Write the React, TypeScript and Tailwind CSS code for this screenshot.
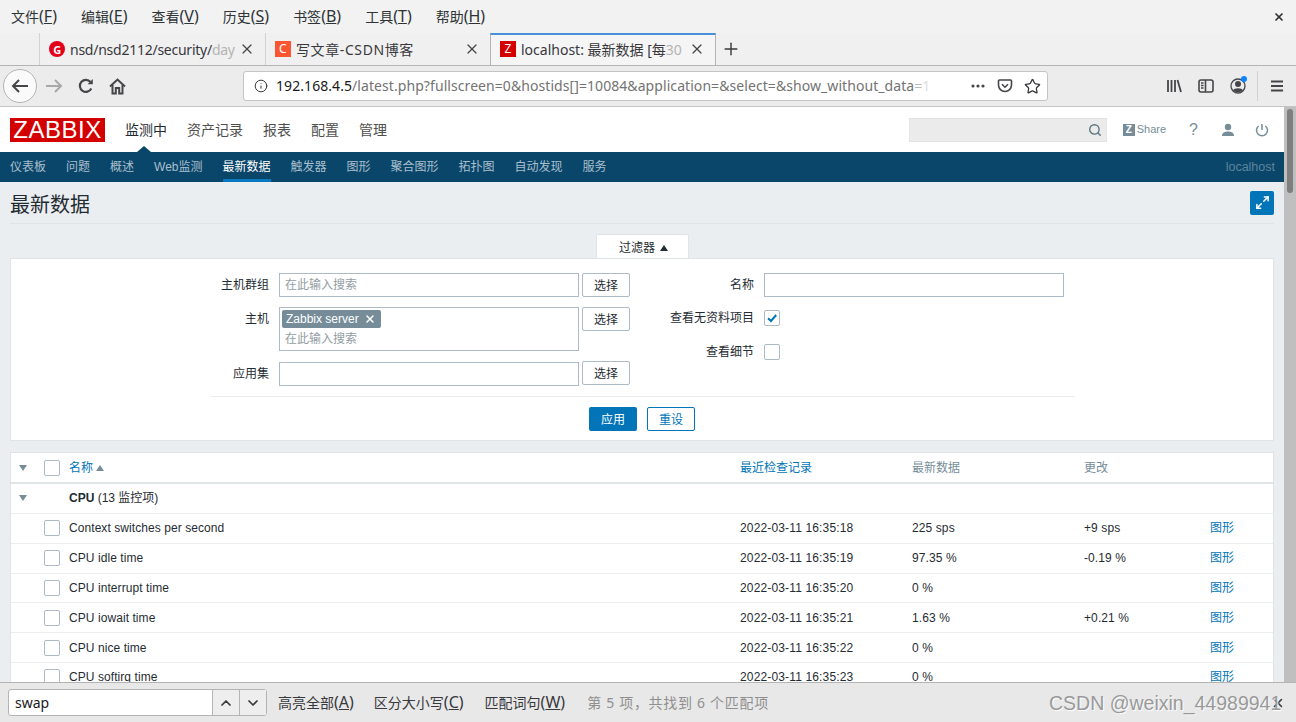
import React from "react";
import { ChevronDown, ChevronUp, Info, Maximize2, Plus, Search, Star, X } from "lucide-react";

const uiFont = "font-['Noto_Sans','Noto_Sans_CJK_SC',sans-serif]";
const pageFont = "font-['Liberation_Sans','Noto_Sans_CJK_SC',sans-serif]";

const menus = [
  ["文件", "F"],
  ["编辑", "E"],
  ["查看", "V"],
  ["历史", "S"],
  ["书签", "B"],
  ["工具", "T"],
  ["帮助", "H"],
];

const topNav = ["监测中", "资产记录", "报表", "配置", "管理"];
const subNav = ["仪表板", "问题", "概述", "Web监测", "最新数据", "触发器", "图形", "聚合图形", "拓扑图", "自动发现", "服务"];

const rows = [
  ["Context switches per second", "2022-03-11 16:35:18", "225 sps", "+9 sps"],
  ["CPU idle time", "2022-03-11 16:35:19", "97.35 %", "-0.19 %"],
  ["CPU interrupt time", "2022-03-11 16:35:20", "0 %", ""],
  ["CPU iowait time", "2022-03-11 16:35:21", "1.63 %", "+0.21 %"],
  ["CPU nice time", "2022-03-11 16:35:22", "0 %", ""],
  ["CPU softirq time", "2022-03-11 16:35:23", "0 %", ""],
];

function Checkbox({ checked }: { checked?: boolean }) {
  return (
    <div className="flex h-4 w-4 items-center justify-center rounded-[2px] border border-[#acbbc7] bg-white">
      {checked && (
        <svg width="12" height="12" viewBox="0 0 12 12" fill="none" stroke="#0275b8" strokeWidth="2">
          <path d="M2 6.2 L5 9 L10.2 3" />
        </svg>
      )}
    </div>
  );
}

function SelectButton() {
  return (
    <button className="h-6 w-12 shrink-0 rounded-[2px] border border-[#acbbc7] bg-white pt-[1px] text-xs text-[#1f2c33]">选择</button>
  );
}

// underlined access key, the latin part runs wider than the CJK part in the reference
function Key({ k }: { k: string }) {
  return (
    <span className="text-[16px] leading-none">
      (<u>{k}</u>)
    </span>
  );
}

function Tab({
  icon,
  title,
  fade,
  active,
  className,
}: {
  icon: React.ReactNode;
  title: string;
  fade?: string;
  active?: boolean;
  className?: string;
}) {
  return (
    <div
      className={`flex h-full items-center pl-[9px] pr-[10px] ${
        active ? "border-x border-[#b4b4b4] border-t-2 border-t-[#4a90d9] bg-[#f5f5f5] pb-[2px]" : "border-l border-[#d2d2d2]"
      } ${className ?? ""}`}
    >
      {icon}
      <span className="ml-[5px] flex-1 overflow-hidden whitespace-nowrap pt-[1px] text-sm text-[#38383d]">
        {title}
        {fade && <span className="text-[#b4b4b4]">{fade}</span>}
      </span>
      <X size={16} strokeWidth={1.8} className="text-[#46464a]" />
    </div>
  );
}

export default function App() {
  return (
    <div className={`relative flex h-[722px] w-[1296px] flex-col overflow-hidden bg-white ${uiFont}`}>
      {/* browser menu bar */}
      <div className="flex h-[33px] shrink-0 items-center bg-[#f2f2f2] pl-[11px] text-sm text-[#2e3436]">
        <div className="flex flex-1 gap-[24px]">
          {menus.map(([name, key]) => (
            <span key={key}>
              {name}
              <Key k={key} />
            </span>
          ))}
        </div>
        <X size={12} strokeWidth={3.4} className="mr-[11px] text-[#2e3436]" />
      </div>

      {/* tabs */}
      <div className="flex h-[33px] shrink-0 items-stretch border-b border-[#b4b4b4] bg-[#f0f0f0] pl-[39px]">
        <Tab
          className="w-[226px] tracking-[-0.25px]"
          title="nsd/nsd2112/security/"
          fade="day"
          icon={
            <div className="flex h-4 w-4 shrink-0 items-center justify-center rounded-full bg-[#e2001a] text-[11px] font-bold leading-none text-white">G</div>
          }
        />
        <Tab
          className="w-[225px] tracking-[0.6px]"
          title="写文章-CSDN博客"
          icon={
            <div className="flex h-4 w-4 shrink-0 items-center justify-center bg-[#fc5531] text-xs leading-none text-white">C</div>
          }
        />
        <Tab
          active
          className="w-[226px]"
          title="localhost: 最新数据 [每"
          fade="30"
          icon={
            <div className="flex h-4 w-4 shrink-0 items-center justify-center bg-[#d40000] text-xs leading-none text-white">Z</div>
          }
        />
        <div className="ml-[5px] flex items-center">
          <Plus size={20} strokeWidth={1.7} className="text-[#38383d]" />
        </div>
      </div>

      {/* navigation bar */}
      <div className="flex h-[41px] shrink-0 items-center border-b border-[#c4c4c4] bg-[#ececec] pl-[3px] text-[#38383d]">
        <div className="flex h-[34px] w-[34px] items-center justify-center rounded-full border border-[#b4b4b4] bg-[#fafafa]">
          <svg width="18" height="16" viewBox="0 0 18 16" fill="none" stroke="#46464a" strokeWidth="2">
            <path d="M17 8 H2 M8 2 L2 8 L8 14" />
          </svg>
        </div>
        <svg className="ml-[8px]" width="18" height="16" viewBox="0 0 18 16" fill="none" stroke="#a8a8a8" strokeWidth="2">
          <path d="M1 8 H16 M10 2 L16 8 L10 14" />
        </svg>
        <svg className="ml-[15px]" width="16" height="16" viewBox="0 0 16 16" fill="none" stroke="#46464a" strokeWidth="2.2">
          <path d="M13.3 10.5 A6 6 0 1 1 12.5 4" />
          <path d="M14.8 1 V6.2 H9.6 Z" fill="#46464a" stroke="none" />
        </svg>
        <svg className="ml-[15px]" width="17" height="17" viewBox="0 0 17 17" fill="none" stroke="#46464a" strokeWidth="2">
          <path d="M1 8.5 L8.5 1.5 L16 8.5" />
          <path d="M3.5 7 V15.5 H6.8 V10 H10.2 V15.5 H13.5 V7" />
        </svg>
        <div className="ml-[117px] flex h-[30px] w-[805px] items-center rounded-[3px] border border-[#c4c4c4] bg-white pl-[10px] pr-[6px]">
          <Info size={14} strokeWidth={1.7} />
          <span className="ml-[8px] w-[665px] overflow-hidden whitespace-nowrap text-sm tracking-[0.07px] text-[#737373]">
            <span className="text-[#1a1a1a]">192.168.4.5</span>/latest.php?fullscreen=0&amp;hostids[]=10084&amp;application=&amp;select=&amp;show_without_data<span className="text-[#b8b8b8]">=</span><span className="text-[#dddddd]">1</span>
          </span>
          <div className="ml-auto flex items-center gap-[11px]">
            <svg width="16" height="16" viewBox="0 0 16 16" fill="#46464a">
              <circle cx="3" cy="8" r="1.6" />
              <circle cx="8" cy="8" r="1.6" />
              <circle cx="13" cy="8" r="1.6" />
            </svg>
            <svg width="16" height="16" viewBox="0 0 16 16" fill="none" stroke="#46464a" strokeWidth="1.6">
              <path d="M2.5 2 H13.5 A1 1 0 0 1 14.5 3 V7 A6.5 6.5 0 0 1 1.5 7 V3 A1 1 0 0 1 2.5 2 Z" />
              <path d="M5 6.2 L8 9.2 L11 6.2" />
            </svg>
            <Star size={17} strokeWidth={1.8} />
          </div>
        </div>
        <div className="ml-[118px] flex items-center">
          <svg width="16" height="16" viewBox="0 0 16 16" fill="none" stroke="#46464a" strokeWidth="1.8">
            <path d="M2 2 V14 M5.5 2 V14 M9 2 V14 M11.5 2 L15 14" />
          </svg>
          <svg className="ml-[16px]" width="16" height="16" viewBox="0 0 16 16" fill="none" stroke="#46464a" strokeWidth="1.6">
            <rect x="1" y="2" width="14" height="12" rx="2" />
            <path d="M7.5 2 V14" />
            <path d="M3 5 H5.5 M3 7.5 H5.5 M3 10 H5.5" strokeWidth="1.3" />
          </svg>
          <div className="relative ml-[16px] h-4 w-4">
            <svg width="16" height="16" viewBox="0 0 16 16" fill="#46464a">
              <circle cx="8" cy="8" r="7" fill="none" stroke="#46464a" strokeWidth="1.3" />
              <circle cx="8" cy="6" r="3" />
              <path d="M3 12.5 C4 9.6 12 9.6 13 12.5 C11 14.6 5 14.6 3 12.5 Z" />
            </svg>
            <div className="absolute -right-[1px] -top-[2px] h-[6px] w-[6px] rounded-full bg-[#0a84ff]" />
          </div>
          <div className="ml-[11px] h-[30px] w-px bg-[#d2d2d2]" />
          <svg className="ml-[12px]" width="14" height="14" viewBox="0 0 14 14" fill="none" stroke="#46464a" strokeWidth="1.8">
            <path d="M1 2.5 H13 M1 7 H13 M1 11.5 H13" />
          </svg>
        </div>
      </div>

      {/* page with scrollbar */}
      <div className="flex min-h-0 flex-1">
        <div className={`w-[1284px] overflow-hidden bg-[#ebeef0] text-xs text-[#1f2c33] ${pageFont}`}>
          <div className="flex h-[45px] items-center bg-white pl-[10px] pr-[10px]">
            <div className="flex h-6 w-[95px] items-center justify-center bg-[#d40000] text-[24px] leading-none tracking-[0.5px] text-white">ZABBIX</div>
            <div className="ml-5 flex gap-5 text-sm text-[#4f4f4f]">
              {topNav.map((item, i) => (
                <span key={item} className={i === 0 ? "text-[#1f2c33]" : ""}>{item}</span>
              ))}
            </div>
            <div className="ml-auto flex h-6 w-[198px] items-center justify-end border border-[#e3e3e3] bg-[#ebebeb] pr-[4px]">
              <Search size={14} strokeWidth={2.4} className="text-[#5f7682]" />
            </div>
            <div className="ml-4 flex h-[12px] w-[12px] items-center justify-center bg-[#768d99] text-[10px] font-bold leading-none text-white">Z</div>
            <span className="ml-[2px] text-[11px] text-[#768d99]">Share</span>
            <span className="ml-[23px] text-base leading-none text-[#768d99]">?</span>
            <svg className="ml-[23px]" width="14" height="14" viewBox="0 0 14 14" fill="#768d99">
              <circle cx="7" cy="4" r="3.2" />
              <path d="M1 13 C1 9.5 4 8.5 7 8.5 C10 8.5 13 9.5 13 13 Z" />
            </svg>
            <svg className="ml-[20px] mr-[5px]" width="14" height="14" viewBox="0 0 14 14" fill="none" stroke="#768d99" strokeWidth="1.5">
              <path d="M7 1 V7" />
              <path d="M3.6 3 A5.5 5.5 0 1 0 10.4 3" />
            </svg>
          </div>

          <div className="relative flex h-[30px] items-center gap-5 bg-[#0a466a] pl-[10px] text-[#a9bfcd]">
            <div className="absolute left-[137px] -top-[6px] h-0 w-0 border-x-[7px] border-b-[6px] border-x-transparent border-b-[#0a466a]" />
            {subNav.map((item) => (
              <span key={item} className={`flex h-full items-center ${item === "最新数据" ? "border-b-[3px] border-[#0a78c0] pt-[3px] text-white" : ""}`}>
                {item}
              </span>
            ))}
            <span className="ml-auto mr-[9px] text-[12.5px] text-[#5e859d]">localhost</span>
          </div>

          <div className="mx-[10px] flex h-[42px] items-center justify-between border-b border-[#dfe4e7]">
            <h1 className="pt-[4px] text-xl leading-none text-[#1f2c33]">最新数据</h1>
            <div className="flex h-6 w-6 items-center justify-center rounded-[2px] bg-[#0275b8]">
              <Maximize2 size={15} strokeWidth={2.4} className="text-white" />
            </div>
          </div>

          <div className="mx-[11px] mt-[10px] flex justify-center pl-[1px]">
            <div className="flex h-[24px] w-[93px] items-center justify-center gap-[5px] rounded-t-[2px] border-x border-t border-[#dfe4e7] bg-white pl-[2px] pt-[2px]">
              过滤器
              <div className="h-0 w-0 border-x-[4px] border-b-[6px] border-x-transparent border-b-[#1f2c33]" />
            </div>
          </div>

          <div className="mx-[10px] border border-[#dfe4e7] bg-white pb-[9px] pl-[200px] pt-[14px]">
            <div className="flex h-[123px] w-[864px]">
              <div className="w-[419px]">
                <div className="flex items-center">
                  <label className="w-[58px] text-right">主机群组</label>
                  <div className="ml-[10px] mr-[3px] flex h-6 w-[300px] items-center border border-[#acbbc7] px-[5px] text-[#929da3]">在此输入搜索</div>
                  <SelectButton />
                </div>
                <div className="mt-[10px] flex">
                  <label className="mt-[4px] w-[58px] text-right">主机</label>
                  <div className="ml-[10px] mr-[3px] h-[44px] w-[300px] border border-[#acbbc7] px-[2px] pt-[2px]">
                    <div className="flex h-[18px] w-[99px] items-center rounded-[2px] bg-[#768d99] pl-[4px] text-white">
                      Zabbix server
                      <X size={12} strokeWidth={3} className="ml-[5px]" />
                    </div>
                    <div className="ml-[3px] mt-[3px] leading-[16px] text-[#929da3]">在此输入搜索</div>
                  </div>
                  <SelectButton />
                </div>
                <div className="mt-[10px] flex">
                  <label className="mt-[5px] w-[58px] text-right">应用集</label>
                  <div className="ml-[10px] mr-[3px] mt-[1px] h-6 w-[300px] border border-[#acbbc7]" />
                  <SelectButton />
                </div>
              </div>
              <div className="w-[434px]">
                <div className="flex h-6 items-center">
                  <label className="w-[124px] text-right">名称</label>
                  <div className="ml-[10px] h-6 w-[300px] border border-[#acbbc7]" />
                </div>
                <div className="mt-[9px] flex h-6 items-center">
                  <label className="w-[124px] text-right">查看无资料项目</label>
                  <div className="ml-[10px]"><Checkbox checked /></div>
                </div>
                <div className="mt-[10px] flex h-6 items-center">
                  <label className="w-[124px] text-right">查看细节</label>
                  <div className="ml-[10px]"><Checkbox /></div>
                </div>
              </div>
            </div>
            <div className="flex w-[864px] justify-center gap-[10px] border-t border-[#ebeef0] pr-[2px] pt-[10px]">
              <button className="h-6 w-12 rounded-[2px] bg-[#0275b8] pt-[1px] text-white">应用</button>
              <button className="h-6 w-12 rounded-[2px] border border-[#0275b8] bg-white pt-[1px] text-[#0275b8]">重设</button>
            </div>
          </div>

          <div className="mx-[10px] mt-[11px] border-x border-t border-[#dfe4e7] bg-white">
            <div className="grid h-[31px] grid-cols-[33px_25px_671px_172px_172px_126px_1fr] items-center border-b-2 border-[#dfe4e7]">
              <div className="ml-[8px] h-0 w-0 border-x-[4px] border-t-[6px] border-x-transparent border-t-[#768d99]" />
              <Checkbox />
              <div className="flex items-center gap-[3px] text-[#0275b8]">
                名称
                <div className="h-0 w-0 border-x-[4px] border-b-[6px] border-x-transparent border-b-[#768d99]" />
              </div>
              <div className="text-[#0275b8]">最近检查记录</div>
              <div className="text-[#768d99]">最新数据</div>
              <div className="text-[#768d99]">更改</div>
              <div />
            </div>
            <div className="grid h-[30px] grid-cols-[33px_25px_1fr] items-center border-b border-[#ebeef0] pb-[2px]">
              <div className="ml-[8px] h-0 w-0 border-x-[4px] border-t-[6px] border-x-transparent border-t-[#768d99]" />
              <div />
              <div>
                <b>CPU</b> (13 监控项)
              </div>
            </div>
            {rows.map((row) => (
              <div key={row[0]} className="grid h-[29.8px] grid-cols-[33px_25px_671px_172px_172px_126px_1fr] items-center border-b border-[#ebeef0]">
                <div />
                <Checkbox />
                <div className="tracking-[0.07px]">{row[0]}</div>
                <div className="tracking-[0.15px]">{row[1]}</div>
                <div className="tracking-[0.1px]">{row[2]}</div>
                <div className="tracking-[0.1px]">{row[3]}</div>
                <div className="text-[#0275b8]">图形</div>
              </div>
            ))}
          </div>
        </div>
        <div className="w-3 shrink-0 bg-[#bfbfbf] pl-[3px] pt-[2px]">
          <div className="h-[84px] w-[6px] rounded-[3px] bg-[#7f7f7f]" />
        </div>
      </div>

      {/* find bar */}
      <div className="flex h-10 shrink-0 items-center border-t border-[#b4b4b4] bg-[#e8e8e8] pl-2 text-sm text-[#38383d]">
        <div className="flex h-[27px] w-[259px] rounded-[3px] border border-[#b4b4b4] bg-white">
          <span className="flex-1 pl-[6px] leading-[25px] text-[#1a1a1a]">swap</span>
          <div className="flex w-[27px] items-center justify-center border-l border-[#b4b4b4] bg-[#eeeeee]">
            <ChevronUp size={16} strokeWidth={2.6} />
          </div>
          <div className="flex w-[27px] items-center justify-center border-l border-[#b4b4b4] bg-[#eeeeee]">
            <ChevronDown size={16} strokeWidth={2.6} />
          </div>
        </div>
        <span className="ml-[11px]">高亮全部<Key k="A" /></span>
        <span className="ml-[20px]">区分大小写<Key k="C" /></span>
        <span className="ml-[21px]">匹配词句<Key k="W" /></span>
        <span className="ml-[22px] tracking-[0.7px] text-[#8f8f8f]">第 5 项，共找到 6 个匹配项</span>
        <X size={14} strokeWidth={2.6} className="ml-auto mr-[11px] text-[#38383d]" />
      </div>

      <div className="absolute bottom-[7px] left-[1049px] whitespace-nowrap font-['Liberation_Sans',sans-serif] text-[19.5px] leading-[24px] text-[#999999] [text-shadow:1px_1px_1px_#ffffff]">
        CSDN @weixin_44989941
      </div>
    </div>
  );
}
